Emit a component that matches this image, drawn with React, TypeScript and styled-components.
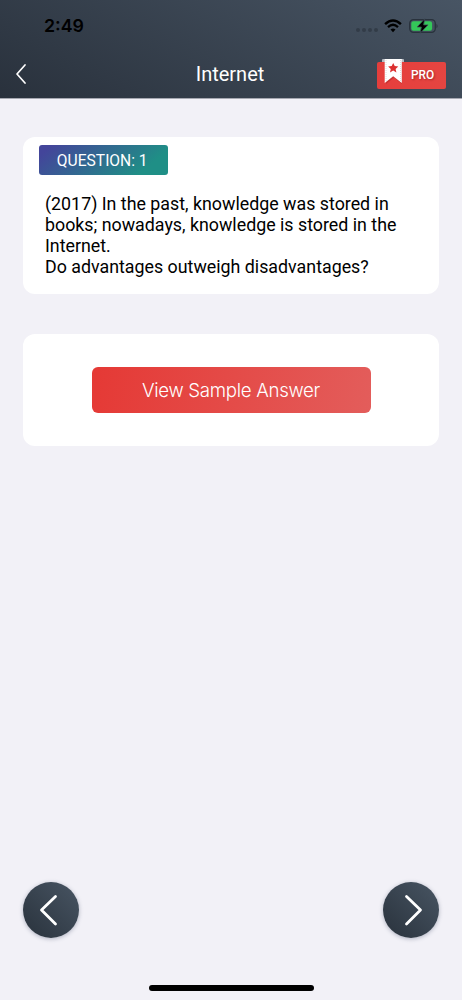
import React from "react";
import styled, { createGlobalStyle } from "styled-components";

const GlobalStyle = createGlobalStyle`
  * { box-sizing: border-box; }
  body { margin: 0; background: #f2f1f7; }
  button { border: 0; padding: 0; background: none; font: inherit; color: inherit; }
`;

const Screen = styled.div`
  width: 462px;
  height: 1000px;
  display: flex;
  flex-direction: column;
  background: #f2f1f7;
  font-family: Roboto, sans-serif;
`;

const Header = styled.header`
  height: 98px;
  flex: none;
  background: linear-gradient(28deg, #29313c 0%, #485564 100%);
  box-shadow: 0 1px 0 #a6a8b1;
`;

const StatusBar = styled.div`
  height: 50px;
  display: flex;
  align-items: center;
  justify-content: space-between;
  padding: 1px 23.5px 0 44px;
`;

const Time = styled.span`
  font: 600 17.8px/22px Inter, sans-serif;
  color: #000;
`;

const StatusIcons = styled.div`
  display: flex;
  align-items: center;
`;

const SignalDots = styled.div`
  display: flex;
  gap: 2px;
  margin: 9px 6px 0 0;
`;

const Dot = styled.i`
  width: 4px;
  height: 4px;
  border-radius: 50%;
  background: #323c47;
`;

const NavBar = styled.div`
  height: 48px;
  display: grid;
  grid-template-columns: 1fr auto 1fr;
  align-items: center;
  padding: 0 16px 0 14px;
`;

const BackButton = styled.button`
  display: flex;
  justify-self: start;
`;

const Title = styled.h1`
  margin: 0;
  font-size: 20px;
  font-weight: 400;
  line-height: 24px;
  color: #fff;
`;

const ProBadge = styled.div`
  position: relative;
  justify-self: end;
  width: 69.5px;
  height: 27px;
  margin-top: 3px;
  padding-left: 34.5px;
  border-radius: 2px;
  background: linear-gradient(90deg, #e53e3c, #e54541);
  color: #fff;
  font-size: 11.9px;
  font-weight: 500;
  line-height: 27px;
  text-shadow: 1px 1px 2px rgba(80, 0, 0, 0.4);
`;

const Ribbon = styled.svg`
  position: absolute;
  left: 4px;
  top: -4px;
`;

const Content = styled.main`
  flex: 1;
  display: flex;
  flex-direction: column;
  gap: 40px;
  padding: 39px 23px 0;
`;

const Card = styled.section<{ $height: number }>`
  height: ${(p) => p.$height}px;
  border-radius: 12px;
  background: #fff;
`;

const QuestionCard = styled(Card)`
  padding: 8px 22px 0;
`;

const AnswerCard = styled(Card)`
  display: flex;
  align-items: flex-start;
  justify-content: center;
  padding-top: 33px;
`;

const QuestionTag = styled.div`
  width: 128.5px;
  height: 30px;
  margin-left: -6px;
  border-radius: 3px;
  background: linear-gradient(140deg, #43459a 8%, #1f8f86 82%);
  color: #fff;
  font-size: 15.6px;
  line-height: 32px;
  text-align: center;
  padding-right: 2px;
`;

const QuestionText = styled.p`
  margin: 19px 0 0;
  font-size: 17.82px;
  line-height: 20.9px;
  color: #000;
  white-space: nowrap;
`;

const AnswerButton = styled.button`
  width: 279px;
  height: 45.5px;
  border-radius: 6px;
  background: linear-gradient(100deg, #e53935, #e35d5b);
  color: #fff;
  font: 300 18.7px/47px Inter, sans-serif;
  letter-spacing: -0.32px;
`;

const Footer = styled.nav`
  display: flex;
  justify-content: space-between;
  padding: 0 23px 47px 22.5px;
`;

const RoundButton = styled.button`
  width: 56px;
  height: 56px;
  border-radius: 50%;
  background: linear-gradient(45deg, #29323c, #485563);
  box-shadow: 0 1px 4px rgba(70, 80, 110, 0.4);
  display: flex;
`;

const HomeIndicator = styled.div`
  width: 165px;
  height: 6px;
  flex: none;
  align-self: center;
  margin-bottom: 9px;
  border-radius: 3px;
  background: #000;
`;

const Battery = styled.svg`
  margin-left: 7px;
`;

const WifiIcon = () => (
  <svg width="18" height="14" viewBox="0 0 18 14" fill="none" stroke="#000">
    <path d="M1.1 5.1Q9-2.1 16.9 5.1" strokeWidth="2.5" />
    <path d="M4 8.1Q9 3.5 14 8.1" strokeWidth="2.3" />
    <path d="M9 13.2 6.5 10.6Q9 8.5 11.5 10.6Z" fill="#000" stroke="none" />
  </svg>
);

const BatteryIcon = () => (
  <Battery width="30" height="16" viewBox="0 0 30 16">
    <rect x=".7" y="1.7" width="25.6" height="12.6" rx="3.8" fill="none" stroke="#29323c" strokeWidth="1.3" />
    <path d="M27.5 5.7q2.2 2.3 0 4.6z" fill="#29323c" />
    <rect x="2.3" y="3.3" width="20.8" height="9.4" rx="2.2" fill="#34c759" />
    <path d="M15.7.8 8.2 9h4.2l-1.3 6.2L19 6.9h-4.4z" fill="#000" stroke="#3f4b57" strokeWidth=".8" />
  </Battery>
);

const BookmarkIcon = () => (
  <Ribbon width="24" height="28" viewBox="0 0 24 28">
    <path d="M1 4V2Q1 1 2 1H22Q23 1 23 2V4Z" fill="#b6bbc2" />
    <path d="M5 3V26L13 19.5 21 26V3Z" fill="#8f2020" opacity=".35" />
    <path d="M3.7 1H20.8V25L12.2 18.3 3.7 25Z" fill="#fff" />
    <path d="M5 2V23M19.5 2V23" stroke="#d5d5d8" strokeWidth=".8" strokeDasharray="1 1" />
    <path d="m12.2 4.9 1.5 3.2 3.6.4-2.7 2.4.8 3.5-3.2-1.8-3.2 1.8.8-3.5-2.7-2.4 3.6-.4z" fill="#dc3131" />
  </Ribbon>
);

const NavArrow = ({ points }: { points: string }) => (
  <svg width="56" height="56" viewBox="0 0 56 56">
    <polyline points={points} fill="none" stroke="#fff" strokeWidth="2.8" strokeLinecap="round" strokeLinejoin="round" />
  </svg>
);

export default function App() {
  return (
    <Screen>
      <GlobalStyle />
      <Header>
        <StatusBar>
          <Time>2:49</Time>
          <StatusIcons>
            <SignalDots>
              <Dot />
              <Dot />
              <Dot />
              <Dot />
            </SignalDots>
            <WifiIcon />
            <BatteryIcon />
          </StatusIcons>
        </StatusBar>
        <NavBar>
          <BackButton aria-label="Back">
            <svg width="14" height="22" viewBox="0 0 14 22">
              <path d="M11 2 3 11 11 20" fill="none" stroke="#fff" strokeWidth="1.7" strokeLinecap="round" strokeLinejoin="round" />
            </svg>
          </BackButton>
          <Title>Internet</Title>
          <ProBadge>
            <BookmarkIcon />
            PRO
          </ProBadge>
        </NavBar>
      </Header>
      <Content>
        <QuestionCard $height={157}>
          <QuestionTag>QUESTION: 1</QuestionTag>
          <QuestionText>
            (2017) In the past, knowledge was stored in
            <br />
            books; nowadays, knowledge is stored in the
            <br />
            Internet.
            <br />
            Do advantages outweigh disadvantages?
          </QuestionText>
        </QuestionCard>
        <AnswerCard $height={112}>
          <AnswerButton>View Sample Answer</AnswerButton>
        </AnswerCard>
      </Content>
      <Footer>
        <RoundButton aria-label="Previous question">
          <NavArrow points="32.5,14.5 18.5,28 32.5,42" />
        </RoundButton>
        <RoundButton aria-label="Next question">
          <NavArrow points="23.5,14.5 37.5,28 23.5,42" />
        </RoundButton>
      </Footer>
      <HomeIndicator />
    </Screen>
  );
}
